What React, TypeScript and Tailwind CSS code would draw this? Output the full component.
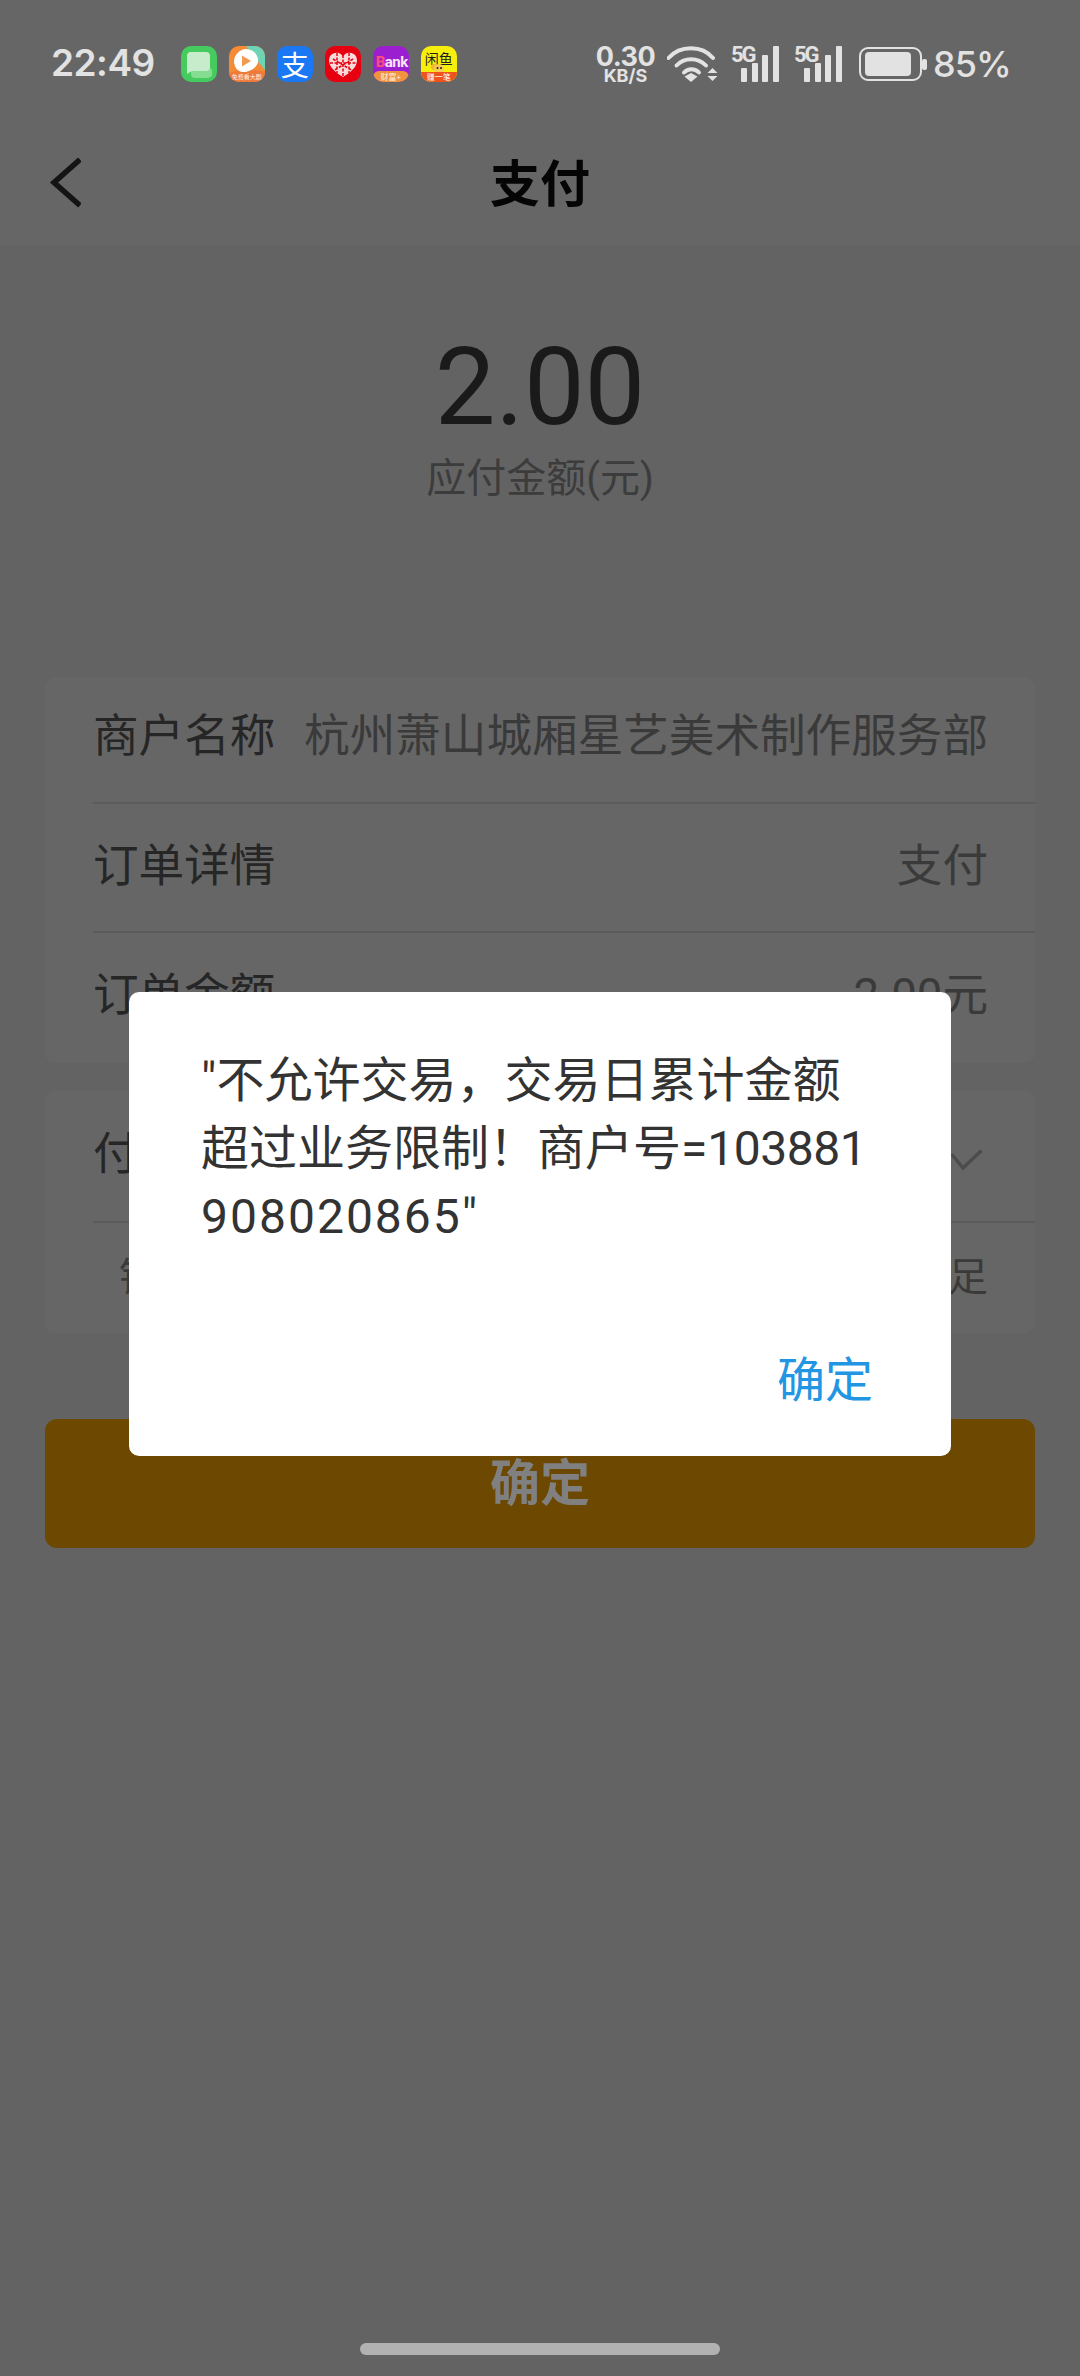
import React from "react";

const cjk = "font-['Roboto','Noto_Sans_CJK_SC',sans-serif]";
const sc = "font-['Noto_Sans_CJK_SC',sans-serif]";

function Signal() {
  return (
    <div className="relative w-[48px] h-[36px]">
      <span className="absolute left-0 top-[-2px] text-[#e2e2e2] text-[22px] leading-[22px] font-bold tracking-[-2px] font-['Roboto',sans-serif]">5G</span>
      <svg className="absolute left-0 top-0" width="48" height="36" viewBox="0 0 48 36">
        <rect x="10" y="22" width="6" height="14" fill="#e2e2e2" rx="1" />
        <rect x="21" y="17" width="6" height="19" fill="#e2e2e2" rx="1" />
        <rect x="31" y="9" width="6" height="27" fill="#e2e2e2" rx="1" />
        <rect x="42" y="0" width="6" height="36" fill="#e2e2e2" rx="1" />
      </svg>
    </div>
  );
}

function Apps() {
  const cls = "w-[36px] h-[36px] rounded-[10px] relative overflow-hidden shrink-0";
  return (
    <div className="flex gap-[12px] ml-[26px]">
      <div className={`${cls} bg-[#46cc5e]`}>
        <svg viewBox="0 0 36 36" width="36" height="36">
          <path d="M10 22h18a3 3 0 0 1 3 3v5l-4 2H14a4 4 0 0 1-4-4z" fill="#86dd92" />
          <path d="M9 6h16a4 4 0 0 1 4 4v11a4 4 0 0 1-4 4H11l-5 3v-3V10a4 4 0 0 1 3-4z" fill="#c6eccb" />
        </svg>
      </div>
      <div className={`${cls} bg-[#f58b34]`}>
        <svg viewBox="0 0 36 36" width="36" height="36">
          <path d="M17 0h19v24L26 12z" fill="#6fd3b6" />
          <path d="M0 27q18-6 36-1v10H0z" fill="#ee7a3a" />
          <path d="M17 3c8 0 13 7 12 13-1 6-9 10-15 10-6 0-9-6-9-11S10 3 17 3z" fill="#fff" />
          <path d="M13 9.500l9 5.500-9 5.500z" fill="#f29a50" />
        </svg>
        <span className={`absolute left-0 right-0 bottom-[1px] text-center text-[#fff3e6] text-[6px] leading-[8px] whitespace-nowrap ${sc}`}>免费看大剧</span>
      </div>
      <div className={`${cls} bg-[#1a78f4] flex items-center justify-center`}>
        <span className={`text-white text-[28px] leading-[32px] ${sc}`}>支</span>
      </div>
      <div className={`${cls} bg-[#e6000f]`}>
        <svg viewBox="0 0 36 36" width="36" height="36">
          <path d="M18 31C8 25 4 20 4 14a7.500 7.500 0 0 1 14-3.500A7.500 7.500 0 0 1 32 14c0 6-4 11-14 17z" fill="#f9d9d9" />
          <path d="M18 9v22M8 13l20 12M28 13L8 25M5 17h26M12 7v20M24 7v20" stroke="#e6000f" strokeWidth="1.5" strokeDasharray="3 1.500" />
        </svg>
      </div>
      <div className={`${cls} bg-[#9b1fd1]`}>
        <div className="absolute left-[3px] top-[7px] text-[#f6e6f6] text-[15px] leading-[18px] font-bold tracking-[-0.5px] font-['Roboto',sans-serif] whitespace-nowrap">
          <span className="text-[#ff4d7a]">B</span>ank
        </div>
        <div className={`absolute left-0 right-0 bottom-0 h-[11px] rounded-t-[6px] bg-[#f0923e] text-center text-[#fff3e0] text-[8px] leading-[11px] ${sc}`}>财富+</div>
      </div>
      <div className={`${cls} bg-[#f8ee0c]`}>
        <div className={`absolute left-0 right-0 top-[5px] text-center text-[#1e1e1e] text-[14px] leading-[14px] whitespace-nowrap ${sc}`}>闲鱼</div>
        <svg className="absolute left-0 top-0" viewBox="0 0 36 36" width="36" height="36">
          <circle cx="13" cy="21" r="3" fill="#f2b632" />
          <circle cx="18" cy="23" r="5" fill="#f6cf52" />
          <circle cx="16.500" cy="22" r="1" fill="#222" />
          <circle cx="20" cy="22" r="1" fill="#222" />
        </svg>
        <div className={`absolute left-0 right-0 bottom-0 h-[10px] bg-[#f0521e] text-center text-[#fff] text-[8px] leading-[10px] ${sc}`}>赚一笔</div>
      </div>
    </div>
  );
}

function StatusBar() {
  return (
    <div className="h-[125px] pt-[46px] flex items-start justify-between pl-[51px] pr-[71px]">
      <div className="flex items-center h-[36px]">
        <span className="text-[#e2e2e2] text-[37px] leading-[36px] font-semibold font-['Inter',sans-serif] tracking-[-0.5px] mt-[-3px]">22:49</span>
        <Apps />
      </div>
      <div className="flex items-center h-[36px]">
        <div className="flex flex-col items-center text-[#e2e2e2] font-bold font-['Inter',sans-serif] w-[57px]">
          <span className="text-[27px] leading-[22px] tracking-[-0.5px]">0.30</span>
          <span className="text-[18px] leading-[15px]">KB/S</span>
        </div>
        <svg className="ml-[13px]" width="51" height="36" viewBox="0 0 51 36">
          <path d="M1.500 12C13 -1 35 -1 46 12" fill="none" stroke="#e2e2e2" strokeWidth="4" strokeLinecap="round" />
          <path d="M9.500 19.500C17 11 31 11 39 19.500" fill="none" stroke="#e2e2e2" strokeWidth="4" strokeLinecap="round" />
          <path d="M17 26.500C21 22 28 22 32 26.500" fill="none" stroke="#e2e2e2" strokeWidth="4" strokeLinecap="round" />
          <path d="M24 27l6.500 3.500L24 36l-6.500-5.500z" fill="#e2e2e2" />
          <path d="M45.500 22l5 5h-10zM40.500 30h10l-5 5z" fill="#e2e2e2" />
        </svg>
        <div className="ml-[13px]"><Signal /></div>
        <div className="ml-[15px]"><Signal /></div>
        <svg className="ml-[17px]" width="68" height="34" viewBox="0 0 68 34">
          <rect x="1" y="1" width="61" height="32" rx="8" fill="none" stroke="#e2e2e2" strokeWidth="2" />
          <rect x="6" y="5" width="46" height="24" rx="4" fill="#e2e2e2" />
          <rect x="63" y="12" width="5" height="11" rx="2" fill="#e2e2e2" />
        </svg>
        <span className="ml-[6px] text-[36px] leading-[36px] font-medium text-[#e2e2e2] font-['Inter',sans-serif] tracking-[-1px] w-[76px] whitespace-nowrap">85%</span>
      </div>
    </div>
  );
}

function Row({ label, value, h, last }: { label: string; value: React.ReactNode; h: string; last?: boolean }) {
  return (
    <div className={`flex items-center justify-between ml-[48px] pr-[47px] ${h} ${last ? "" : "border-b-2 border-[#5b5b5b]"}`}>
      <span className="text-[#262626] text-[45.6px] whitespace-nowrap">{label}</span>
      <span className="text-[#3a3a3a] text-[45.6px] whitespace-nowrap">{value}</span>
    </div>
  );
}

export default function App() {
  return (
    <div className={`relative w-[1080px] h-[2376px] bg-[#636363] overflow-hidden flex flex-col ${cjk}`}>
      <div className="bg-[#666666]">
        <StatusBar />
        <div className="h-[120px] relative flex items-center justify-center">
          <svg className="absolute left-[45px] top-[33px]" width="36" height="50" viewBox="0 0 36 50">
            <path d="M35 1.500L9 24.500l26 23" fill="none" stroke="#141414" strokeWidth="5.500" />
          </svg>
          <span className="text-[#050505] text-[50px] font-bold leading-none">支付</span>
        </div>
      </div>
      <div className="flex-1">
        <div className="flex flex-col items-center pt-[77px]">
          <span className="text-[108px] leading-[130px] font-normal text-[#1a1a1a] font-['Roboto',sans-serif]">2.00</span>
          <span className="text-[40px] leading-[56px] text-[#3c3c3c] mt-[-1px]">应付金额(元)</span>
        </div>
        <div className="mt-[170px] mx-[45px] bg-[#666666] rounded-[10px] overflow-hidden">
          <Row h="h-[127px] pb-[4px]" label="商户名称" value="杭州萧山城厢星艺美术制作服务部" />
          <Row h="h-[129px]" label="订单详情" value="支付" />
          <Row h="h-[130px] pb-[4px]" label="订单金额" value="2.00元" last />
        </div>
        <div className="mt-[27px] mx-[45px] bg-[#666666] rounded-[10px] overflow-hidden">
          <Row
            h="h-[133px]"
            label="付款方式"
            value={
              <svg className="mt-[8px] mr-[5px]" width="33" height="22" viewBox="0 0 33 22">
                <path d="M1.500 5l11.500 14L31.500 1.500" fill="none" stroke="#4c4c4c" strokeWidth="3.500" />
              </svg>
            }
          />
          <div className="flex items-center justify-between h-[110px] ml-[74px] pr-[47px]">
            <span className="text-[#3a3a3a] text-[40px]">银行卡余额</span>
            <span className="text-[#3a3a3a] text-[40px]">余额不足</span>
          </div>
        </div>
        <div className="mt-[86px] mx-[45px] h-[129px] rounded-[12px] bg-[#6c4800] flex items-center justify-center">
          <span className="text-[#808080] text-[50px] font-bold leading-none">确定</span>
        </div>
      </div>
      <div className="absolute left-[129px] top-[992px] w-[822px] h-[464px] bg-white rounded-[10px] pt-[55px] pl-[72px] pr-[76px]">
        <p className="text-[#333333] text-[48px] leading-[68px] break-all">
          "不允许交易，交易日累计金额超过业务限制！商户号=<span className="tracking-[-0.5px]">103881</span><span className="tracking-[2px]">908020865</span>"
        </p>
        <div className="absolute right-[78px] bottom-[51px] text-[#2296e2] text-[48px] leading-none">确定</div>
      </div>
      <div className="absolute left-[360px] top-[2343px] w-[360px] h-[12px] rounded-full bg-[#b2b2b2]" />
    </div>
  );
}
